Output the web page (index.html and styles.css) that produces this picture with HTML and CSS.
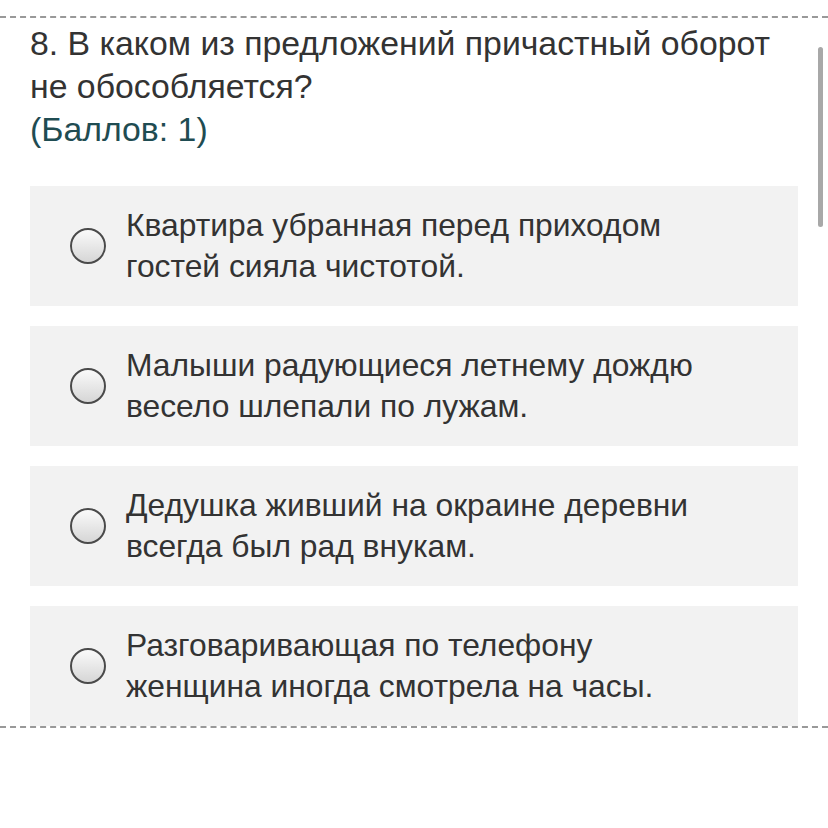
FILE: index.html
```html
<!DOCTYPE html>
<html lang="ru">
<head>
<meta charset="utf-8">
<link rel="stylesheet" href="styles.css">
</head>
<body>
<div class="page">
  <div class="question">
    <div class="qtext">8. В каком из предложений причастный оборот не обособляется?</div>
    <div class="points">(Баллов: 1)</div>
    <div class="answers">
      <div class="answer"><span class="radio"></span><span class="atext">Квартира убранная перед приходом гостей сияла чистотой.</span></div>
      <div class="answer"><span class="radio"></span><span class="atext">Малыши радующиеся летнему дождю весело шлепали по лужам.</span></div>
      <div class="answer"><span class="radio"></span><span class="atext">Дедушка живший на окраине деревни всегда был рад внукам.</span></div>
      <div class="answer"><span class="radio"></span><span class="atext">Разговаривающая по телефону женщина иногда смотрела на часы.</span></div>
    </div>
  </div>
</div>
<div class="scrollbar"></div>
</body>
</html>
```
FILE: styles.css
```css
html, body { margin: 0; padding: 0; background: #fff; }
body { font-family: "Liberation Sans", Arial, sans-serif; color: #333; width: 828px; height: 828px; overflow: hidden; position: relative; }
.page { padding-top: 16px; }
.question { border-top: 2px dashed #999; border-bottom: 2px dashed #999; padding: 4px 30px 0 30px; }
.qtext { font-size: 33.8px; line-height: 43px; color: #333; width: 760px; }
.points { font-size: 33.8px; line-height: 43px; color: #1f4c52; }
.answers { display: flex; flex-direction: column; gap: 20px; margin-top: 35px; }
.answer { background: #f2f2f2; height: 120px; display: flex; align-items: center; }
.radio { flex: none; width: 32px; height: 32px; border: 2px solid #4a4a4a; border-radius: 50%; margin-left: 40px; margin-right: 20px; background: linear-gradient(#fafafa, #d6d6d6); }
.atext { font-size: 31.8px; line-height: 41px; color: #333; width: 600px; }
.scrollbar { position: absolute; left: 818px; top: 47px; width: 5px; height: 180px; background: #a8a8a8; border-radius: 3px; }
```
